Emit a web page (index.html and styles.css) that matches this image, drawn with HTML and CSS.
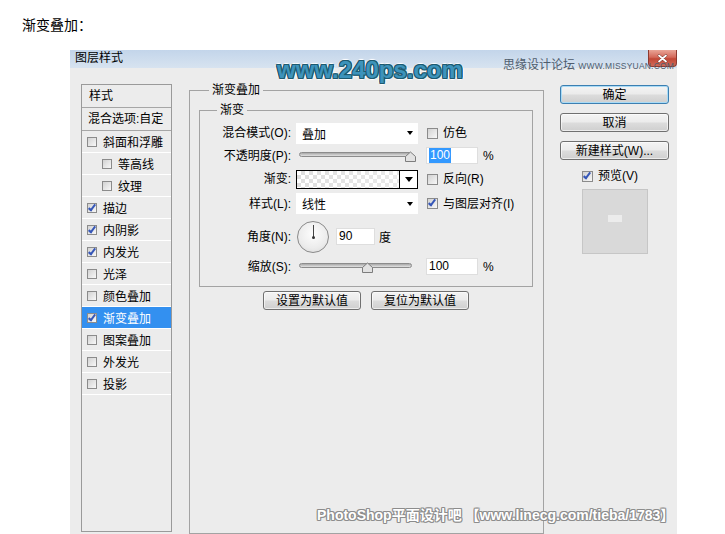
FILE: index.html
```html
<!DOCTYPE html>
<html lang="zh-CN">
<head>
<meta charset="utf-8">
<title>渐变叠加</title>
<link rel="stylesheet" href="styles.css">
</head>
<body>
<p class="heading">渐变叠加：</p>
<div class="dialog">
  <div class="titlebar">
    <span class="title">图层样式</span>
    <span class="close">
      <svg width="11" height="9" viewBox="0 0 11 9"><path d="M2 1.5 L9 7.5 M9 1.5 L2 7.5" stroke="#6a2a22" stroke-width="2.6" stroke-linecap="round"/><path d="M2 1.5 L9 7.5 M9 1.5 L2 7.5" stroke="#fff" stroke-width="1.8" stroke-linecap="round"/></svg>
    </span>
  </div>
  <div class="dlg-body">
    <div class="styles-list">
      <div class="list-head">样式</div>
      <div class="list-blend">混合选项:自定</div>
      <div class="item"><span class="cb"></span>斜面和浮雕</div>
      <div class="item sub"><span class="cb"></span>等高线</div>
      <div class="item sub"><span class="cb"></span>纹理</div>
      <div class="item"><span class="cb on"></span>描边</div>
      <div class="item"><span class="cb on"></span>内阴影</div>
      <div class="item"><span class="cb on"></span>内发光</div>
      <div class="item"><span class="cb"></span>光泽</div>
      <div class="item"><span class="cb"></span>颜色叠加</div>
      <div class="item active"><span class="cb on"></span>渐变叠加</div>
      <div class="item"><span class="cb"></span>图案叠加</div>
      <div class="item"><span class="cb"></span>外发光</div>
      <div class="item"><span class="cb"></span>投影</div>
    </div>

    <div class="group outer">
      <div class="legend outer-legend">渐变叠加</div>
      <div class="group inner">
        <div class="legend inner-legend">渐变</div>
        <div class="form">
          <span class="lbl">混合模式(O):</span>
          <div class="select"><span>叠加</span><i class="arrow"></i></div>
          <div class="check"><span class="cb big"></span>仿色</div>

          <span class="lbl">不透明度(P):</span>
          <div class="slider"><div class="track"></div>
            <svg class="thumb" style="left:108px" width="13" height="11" viewBox="0 0 13 11"><path d="M1.5 10.5 V5.5 L6.5 1 L11.5 5.5 V10.5 Z" fill="#e2e2e2" stroke="#7d7d7d"/></svg>
          </div>
          <div class="num"><span class="field"><span class="sel">100</span></span><span>%</span></div>

          <span class="lbl">渐变:</span>
          <div class="gradient"><div class="checker"></div><div class="gbtn"><i class="arrow big-arrow"></i></div></div>
          <div class="check"><span class="cb big"></span>反向(R)</div>

          <span class="lbl">样式(L):</span>
          <div class="select"><span>线性</span><i class="arrow"></i></div>
          <div class="check"><span class="cb big on"></span>与图层对齐(I)</div>

          <span class="lbl">角度(N):</span>
          <div class="angle"><div class="dial"></div><span class="field angle-field">90</span><span class="deg">度</span></div>

          <span class="lbl">缩放(S):</span>
          <div class="slider"><div class="track"></div>
            <svg class="thumb" style="left:65px" width="13" height="11" viewBox="0 0 13 11"><path d="M1.5 10.5 V5.5 L6.5 1 L11.5 5.5 V10.5 Z" fill="#e2e2e2" stroke="#7d7d7d"/></svg>
          </div>
          <div class="num"><span class="field">100</span><span>%</span></div>
        </div>
      </div>
      <div class="defaults">
        <button class="btn wide">设置为默认值</button>
        <button class="btn wide">复位为默认值</button>
      </div>
    </div>

    <div class="actions">
      <button class="btn primary">确定</button>
      <button class="btn">取消</button>
      <button class="btn">新建样式(W)...</button>
      <div class="preview-check"><span class="cb big on"></span>预览(V)</div>
      <div class="preview"><div class="swatch"></div></div>
    </div>
  </div>

  <div class="wm-240">www.240ps.com</div>
  <div class="wm-missyuan">思缘设计论坛 <span class="wm-small">WWW.MISSYUAN.COM</span></div>
  <div class="wm-linecg">PhotoShop平面设计吧 【www.linecg.com/tieba/1783】</div>
</div>
</body>
</html>
```
FILE: styles.css
```css
html, body {
  margin: 0;
  height: 100%;
  overflow: hidden;
  background: #fff;
}
body {
  font-family: "Liberation Sans", "Noto Sans CJK SC", sans-serif;
  font-size: 12px;
  color: #000;
}
.heading {
  margin: 0;
  padding: 17px 0 0 22px;
  font-size: 14px;
  line-height: 16px;
}
.dialog {
  position: relative;
  margin: 17px 0 0 70px;
  width: 607px;
  height: 484px;
  background: #ececec;
  overflow: hidden;
}
.titlebar {
  height: 18px;
  display: flex;
  align-items: flex-start;
  background: linear-gradient(#c3d5ea, #d7e3f0);
}
.title {
  padding-left: 5px;
  line-height: 17px;
}
.close {
  margin-left: auto;
  width: 27px;
  height: 16px;
  border: 1px solid #8d3a30;
  border-top: none;
  border-radius: 0 0 4px 4px;
  background: linear-gradient(#e9a597, #d4695a 45%, #c24736 55%, #cf6a58);
  display: flex;
  align-items: center;
  justify-content: center;
}
.dlg-body {
  display: flex;
  align-items: flex-start;
  padding-left: 11px;
}

/* left list */
.styles-list {
  margin-top: 16px;
  width: 89px;
  height: 446px;
  border: 1px solid #9a9a9a;
  flex: none;
}
.list-head, .list-blend {
  height: 22px;
  line-height: 22px;
  padding-left: 6px;
  border-bottom: 1px solid #a6a6a6;
}
.list-head { padding-left: 7px; }
.item {
  height: 21px;
  border-bottom: 1px solid #fff;
  display: flex;
  align-items: center;
  gap: 6px;
  padding-left: 5px;
}
.item.sub { padding-left: 20px; }
.item.active {
  background: #3390f0;
  color: #fff;
}
.cb {
  position: relative;
  flex: none;
  width: 8px;
  height: 8px;
  border: 1px solid #8b8b8b;
  background: linear-gradient(135deg, #d2d2d2, #f8f8f8);
}
.cb.big {
  width: 9px;
  height: 9px;
}
.cb.on::after {
  content: "";
  position: absolute;
  left: 2px;
  top: -1px;
  width: 2px;
  height: 6px;
  border: solid #3657b8;
  border-width: 0 2px 2px 0;
  transform: rotate(38deg);
}

/* group boxes */
.group {
  border: 1px solid #a3a3a3;
}
.outer {
  margin: 22px 0 0 17px;
  width: 334px;
  height: 442px;
  padding: 0 10px 0 9px;
  flex: none;
}
.legend {
  width: max-content;
  margin-top: -9px;
  padding: 0 3px;
  line-height: 16px;
  background: #ececec;
}
.outer-legend { margin-left: 10px; }
.inner {
  margin-top: 12px;
  width: 332px;
}
.inner-legend { margin-left: 17px; }

.form {
  display: grid;
  grid-template-columns: 91px 122px 1fr;
  grid-template-rows: 22px 23px 24px 25px 41px 19px;
  column-gap: 5px;
  align-items: center;
  margin-top: 4px;
  padding-bottom: 10px;
}
.lbl {
  text-align: right;
  line-height: 16px;
}
.select {
  height: 21px;
  background: #fff;
  display: flex;
  align-items: center;
  justify-content: space-between;
  padding: 0 5px 0 6px;
}
.arrow {
  width: 0;
  height: 0;
  border-left: 3px solid transparent;
  border-right: 3px solid transparent;
  border-top: 4px solid #000;
}
.arrow.big-arrow {
  border-left-width: 4px;
  border-right-width: 4px;
  border-top-width: 5px;
}
.check {
  display: flex;
  align-items: center;
  gap: 5px;
  margin-left: 4px;
  line-height: 16px;
}
.slider {
  position: relative;
  height: 12px;
}
.track {
  margin: 2px 6px 0 3px;
  height: 3px;
  border: 1px solid #8c8c8c;
  border-radius: 3px;
  background: linear-gradient(#a8a8a8, #e2e2e2);
}
.thumb {
  position: absolute;
  bottom: 0;
}
.num {
  display: flex;
  align-items: center;
  gap: 5px;
  margin-left: 3px;
}
.field {
  display: inline-block;
  box-sizing: border-box;
  width: 52px;
  height: 17px;
  padding-left: 2px;
  line-height: 15px;
  background: #fff;
  border: 1px solid #dedede;
}
.sel {
  display: inline-block;
  background: #3399ff;
  color: #fff;
  padding: 0 1px;
}
.gradient {
  height: 17px;
  border: 1px solid #000;
  display: flex;
  background: #fff;
}
.checker {
  flex: 1;
  background:
    linear-gradient(to right, rgba(255,255,255,0), rgba(255,255,255,0.35)),
    conic-gradient(#dedede 25%, #fff 0 50%, #dedede 0 75%, #fff 0) 0 0 / 8px 8px;
}
.gbtn {
  width: 17px;
  border-left: 1px solid #000;
  display: flex;
  align-items: center;
  justify-content: center;
}
.angle {
  grid-column: 2 / 4;
  display: flex;
  align-items: center;
}
.dial {
  position: relative;
  width: 30px;
  height: 30px;
  margin-left: 1px;
  border: 1px solid #8a8a8a;
  border-radius: 50%;
  background: radial-gradient(circle at 50% 40%, #fdfdfd, #ececec 60%, #d6d6d6);
}
.dial::before {
  content: "";
  position: absolute;
  left: 14.5px;
  top: 3px;
  width: 1px;
  height: 12px;
  background: #444;
}
.dial::after {
  content: "";
  position: absolute;
  left: 13.5px;
  top: 14px;
  width: 3px;
  height: 3px;
  border-radius: 50%;
  background: #333;
}
.field.angle-field {
  width: 39px;
  margin-left: 7px;
}
.deg { margin-left: 4px; }

.defaults {
  display: flex;
  justify-content: center;
  gap: 10px;
  margin-top: 4px;
}

/* buttons */
.btn {
  box-sizing: border-box;
  height: 19px;
  padding: 0;
  font: inherit;
  line-height: 16px;
  color: #000;
  border: 1px solid #707070;
  border-radius: 3px;
  background: linear-gradient(#f4f4f4, #ebebeb 48%, #dcdcdc 52%, #cfcfcf);
  box-shadow: inset 0 0 0 1px rgba(255,255,255,0.6);
}
.btn.wide { width: 98px; }
.actions {
  margin: 17px 0 0 16px;
  width: 109px;
  display: flex;
  flex-direction: column;
  flex: none;
}
.actions .btn { margin-bottom: 9px; }
.btn.primary {
  border-color: #3c7fb1;
  box-shadow: inset 0 0 0 1px #a9dbf6;
}
.preview-check {
  display: flex;
  align-items: center;
  gap: 5px;
  padding-left: 22px;
  line-height: 14px;
}
.preview {
  margin: 6px 0 0 22px;
  width: 64px;
  height: 63px;
  border: 1px solid #c6c6c6;
  background: #d9d9d9;
  display: flex;
  align-items: center;
  justify-content: center;
}
.swatch {
  width: 14px;
  height: 7px;
  margin-bottom: 6px;
  background: #ececec;
}

/* watermarks overlaying the screenshot */
.wm-240 {
  position: absolute;
  left: 207px;
  top: 8px;
  font-family: "Liberation Sans", sans-serif;
  font-weight: bold;
  font-size: 24px;
  line-height: 24px;
  color: #3d93bb;
  text-shadow:
    1px 0 0 #1e5a70, -1px 0 0 #1e5a70, 0 1px 0 #1e5a70, 0 -1px 0 #1e5a70,
    1px 1px 0 #1e5a70, -1px -1px 0 #1e5a70, 1px -1px 0 #1e5a70, -1px 1px 0 #1e5a70,
    2px 0 1px #fff, -2px 0 1px #fff, 0 2px 1px #fff, 0 -2px 1px #fff;
}
.wm-missyuan {
  position: absolute;
  left: 433px;
  top: 9px;
  line-height: 12px;
  font-size: 12px;
  color: #4f5d6e;
  white-space: nowrap;
}
.wm-small {
  font-size: 8.5px;
  letter-spacing: 0.2px;
}
.wm-linecg {
  position: absolute;
  left: 247px;
  top: 457px;
  font-weight: bold;
  font-size: 14px;
  line-height: 16px;
  color: #fff;
  white-space: nowrap;
  text-shadow:
    1px 0 0 #8c8c8c, -1px 0 0 #8c8c8c, 0 1px 0 #8c8c8c, 0 -1px 0 #8c8c8c,
    1px 1px 0 #9a9a9a, -1px -1px 0 #9a9a9a, 1px -1px 0 #9a9a9a, -1px 1px 0 #9a9a9a;
}
```
